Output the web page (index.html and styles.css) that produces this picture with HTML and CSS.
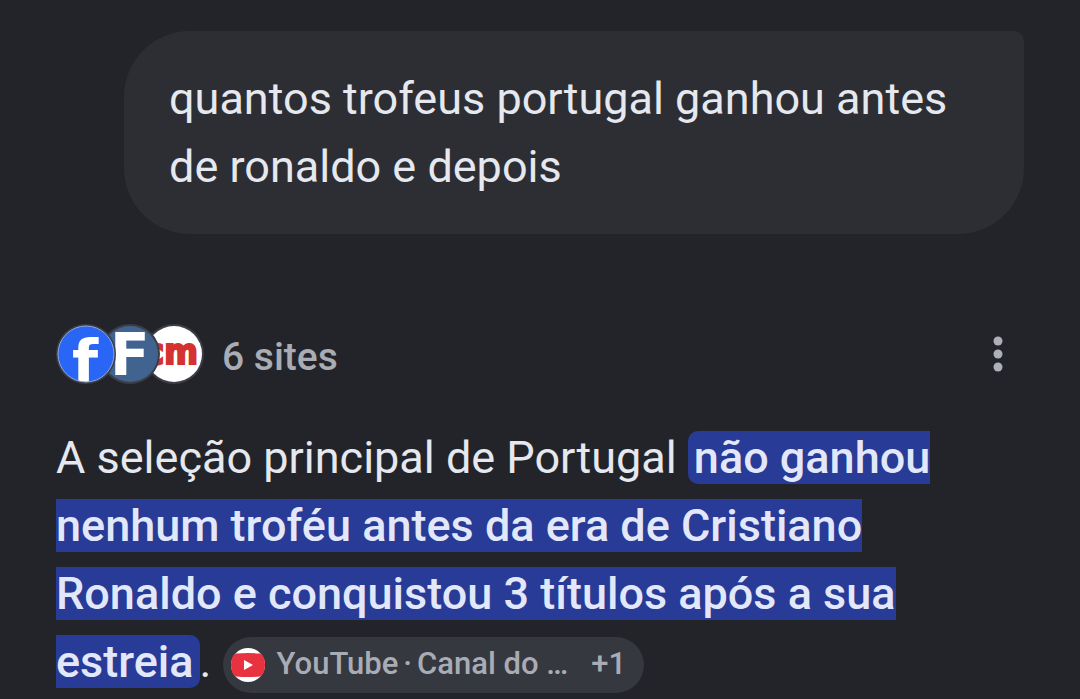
FILE: index.html
```html
<!DOCTYPE html>
<html lang="pt">
<head>
<meta charset="utf-8">
<meta name="viewport" content="width=device-width, initial-scale=1">
<title>quantos trofeus portugal ganhou antes de ronaldo e depois</title>
<link rel="stylesheet" href="styles.css">
</head>
<body>
<main class="chat">
  <p class="question">quantos trofeus portugal ganhou antes de ronaldo e depois</p>

  <div class="sources">
    <button class="sites" type="button">
      <span class="logos">
        <svg class="logo" viewBox="0 0 60 60" aria-hidden="true">
          <defs><clipPath id="disc"><circle cx="30" cy="30" r="28"/></clipPath></defs>
          <circle class="ring" cx="30" cy="30" r="30"/>
          <g clip-path="url(#disc)">
            <circle class="fb" cx="30" cy="30" r="28"/>
            <text class="fb-mark" x="16" y="59">f</text>
          </g>
          <circle class="fb-edge" cx="30" cy="30" r="28"/>
        </svg>
        <svg class="logo" viewBox="0 0 60 60" aria-hidden="true">
          <circle class="ring" cx="30" cy="30" r="30"/>
          <circle class="forum" cx="30" cy="30" r="28"/>
          <text class="forum-mark" x="10" y="51">F</text>
        </svg>
        <svg class="logo" viewBox="0 0 60 60" aria-hidden="true">
          <circle class="ring" cx="30" cy="30" r="30"/>
          <circle class="cm" cx="30" cy="30" r="28"/>
          <text class="cm-mark" x="54" y="40" text-anchor="end">cm</text>
        </svg>
      </span>
      <span class="count">6 sites</span>
    </button>
    <button class="more" type="button" aria-label="Mais">
      <svg viewBox="0 0 10 36" aria-hidden="true">
        <circle cx="5" cy="5" r="4.5"/>
        <circle cx="5" cy="18" r="4.5"/>
        <circle cx="5" cy="31" r="4.5"/>
      </svg>
    </button>
  </div>

  <p class="answer">A seleção principal de Portugal <mark>não ganhou nenhum troféu antes da era de Cristiano Ronaldo e conquistou 3 títulos após a sua estreia</mark>. <button class="chip" type="button">
    <svg viewBox="0 0 34 34" aria-hidden="true">
      <circle cx="17" cy="17" r="17" fill="#fff"/>
      <path fill="#e8323f" d="M5 5.500Q17 4.500 29 5.500Q34 8 34 17T29 28.500Q17 29.500 5 28.500Q0 26 0 17T5 5.500Z"/>
      <path fill="#fff" d="M13 12v10l9-5z"/>
    </svg>
    <span class="chip-name">YouTube<span class="dot">·</span>Canal do …</span>
    <span class="chip-more">+1</span>
  </button></p>
</main>
</body>
</html>
```

FILE: styles.css
```css
* { box-sizing: border-box; }
body {
  margin: 0;
  background: #232429;
  color: #e6e8f0;
  font: 45px/68px Roboto, "Noto Sans", sans-serif;
}
button {
  border: 0; padding: 0;
  background: none;
  color: #a9acb4;
  font: inherit;
  font-weight: 500;
  cursor: pointer;
}
p { margin: 0; }

.chat { padding: 31px 56px 0; }

.question {
  margin-left: 68px;
  padding: 34px 45px 33px;
  background: #2d2e33;
  border-radius: 66px 10px 66px 66px;
}

.sources {
  display: flex;
  align-items: center;
  justify-content: space-between;
  margin: 90px 0 40px;
}
.sites {
  display: flex;
  align-items: center;
  gap: 18px;
  font-size: 39px;
  line-height: 54px;
}
.count { padding-top: 6px; }
.logos { display: flex; }
.logo { width: 60px; height: 60px; position: relative; }
.logo + .logo { margin-left: -16px; }
.logo:nth-child(1) { z-index: 3; }
.logo:nth-child(2) { z-index: 2; }
.logo:nth-child(3) { z-index: 1; }
.ring { fill: #3c3e45; }
.fb { fill: #2a66f6; }
.fb-edge { fill: none; stroke: #8fa9e8; stroke-width: 1; }
.forum { fill: #41638f; }
.cm { fill: #fff; }
.fb-mark { fill: #fff; font: bold 60px "DejaVu Sans", sans-serif; }
.forum-mark { fill: #fff; font: bold 58px "DejaVu Sans", sans-serif; }
.cm-mark {
  fill: #d5322f;
  stroke: #d5322f; stroke-width: 2;
  font: bold 36px "Liberation Sans Narrow", "DejaVu Sans Condensed", sans-serif;
}

.more { display: flex; padding: 0 21px; }
.more svg { width: 10px; height: 36px; fill: #adb0b7; }

mark {
  padding: 0 6px;
  background: #283b96;
  color: #e3e7fa;
  border-radius: 10px;
  font-weight: 500;
}

.chip {
  display: inline-flex;
  align-items: center;
  height: 56px;
  padding: 0 18px 0 8px;
  border-radius: 28px;
  background: #363840;
  font-size: 31px;
  line-height: 54px;
  vertical-align: middle;
}
.chip svg { width: 34px; height: 34px; margin-right: 12px; }
.chip-name, .chip-more { padding-bottom: 2px; }
.chip-name { margin-right: 23px; }
.dot { padding: 0 5px; }
```
